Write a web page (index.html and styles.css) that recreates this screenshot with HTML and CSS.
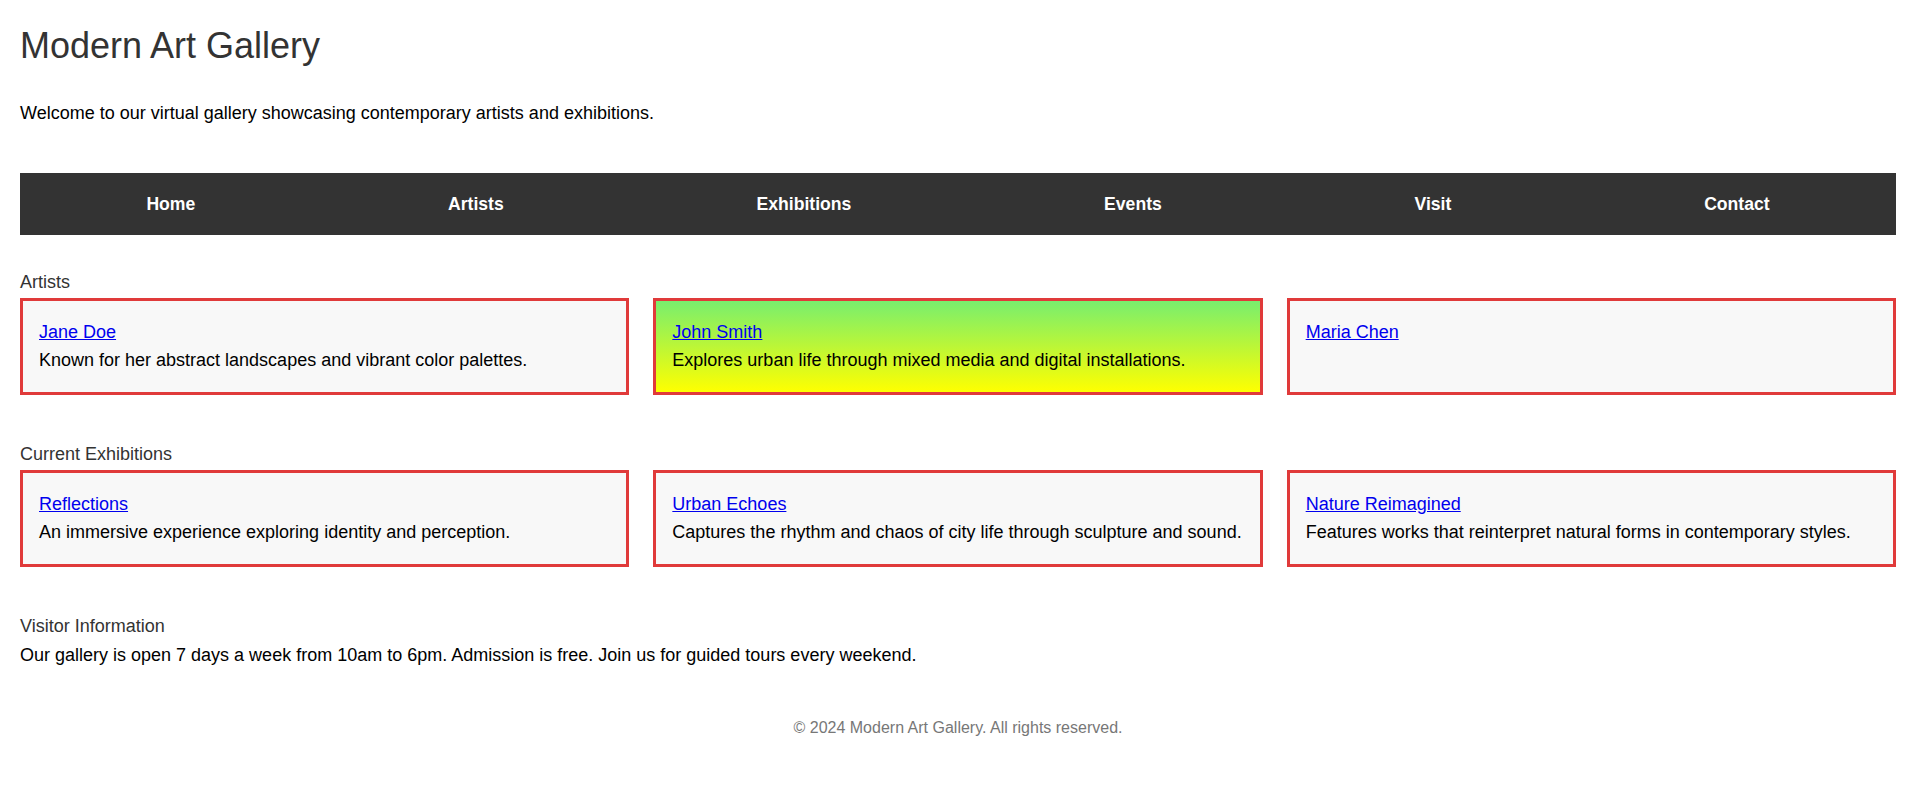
FILE: index.html
```html
<!DOCTYPE html>
<html lang="en">
<head>
<meta charset="utf-8">
<title>Modern Art Gallery</title>
<link rel="stylesheet" href="styles.css">
</head>
<body>
<div class="page">
  <header class="site-header">
    <h1 class="site-title">Modern Art Gallery</h1>
    <p class="intro">Welcome to our virtual gallery showcasing contemporary artists and exhibitions.</p>
  </header>

  <nav class="main-nav">
    <a href="#" class="nav-link">Home</a>
    <a href="#" class="nav-link">Artists</a>
    <a href="#" class="nav-link">Exhibitions</a>
    <a href="#" class="nav-link">Events</a>
    <a href="#" class="nav-link">Visit</a>
    <a href="#" class="nav-link">Contact</a>
  </nav>

  <section class="section">
    <h2 class="section-title">Artists</h2>
    <div class="card-grid">
      <div class="card">
        <h3 class="card-title"><a href="#">Jane Doe</a></h3>
        <p class="card-text">Known for her abstract landscapes and vibrant color palettes.</p>
      </div>
      <div class="card card-gradient">
        <h3 class="card-title"><a href="#">John Smith</a></h3>
        <p class="card-text">Explores urban life through mixed media and digital installations.</p>
      </div>
      <div class="card">
        <h3 class="card-title"><a href="#">Maria Chen</a></h3>
      </div>
    </div>
  </section>

  <section class="section">
    <h2 class="section-title">Current Exhibitions</h2>
    <div class="card-grid">
      <div class="card">
        <h3 class="card-title"><a href="#">Reflections</a></h3>
        <p class="card-text">An immersive experience exploring identity and perception.</p>
      </div>
      <div class="card">
        <h3 class="card-title"><a href="#">Urban Echoes</a></h3>
        <p class="card-text">Captures the rhythm and chaos of city life through sculpture and sound.</p>
      </div>
      <div class="card">
        <h3 class="card-title"><a href="#">Nature Reimagined</a></h3>
        <p class="card-text">Features works that reinterpret natural forms in contemporary styles.</p>
      </div>
    </div>
  </section>

  <section class="section visitor">
    <h2 class="section-title">Visitor Information</h2>
    <p class="visitor-text">Our gallery is open 7 days a week from 10am to 6pm. Admission is free. Join us for guided tours every weekend.</p>
  </section>

  <footer class="site-footer">© 2024 Modern Art Gallery. All rights reserved.</footer>
</div>
</body>
</html>
```

FILE: styles.css
```css
html, body {
  margin: 0;
  padding: 0;
  background: #ffffff;
}

body {
  font-family: "Liberation Sans", Arial, sans-serif;
  font-size: 18px;
  color: #000000;
}

.page {
  padding: 0 20px;
}

.site-title {
  margin: 25px 0 0;
  font-size: 36px;
  font-weight: normal;
  color: #333333;
  line-height: normal;
}

.intro {
  margin: 36px 0 0;
}

.main-nav {
  margin-top: 49px;
  background: #333333;
  height: 62px;
  display: flex;
  justify-content: space-around;
  align-items: center;
}

.nav-link {
  color: #ffffff;
  font-weight: bold;
  font-size: 17.6px;
  text-decoration: none;
}

.section {
  margin-top: 37px;
}

.section + .section {
  margin-top: 49px;
}

.section-title {
  margin: 0 0 5px;
  font-size: 18px;
  font-weight: normal;
  color: #333333;
  line-height: normal;
}

.card-grid {
  display: grid;
  grid-template-columns: repeat(3, 1fr);
  gap: 24px;
}

.card {
  border: 3px solid #e03a3a;
  background: #f8f8f8;
  padding: 21px 16px 21px;
}

.card-gradient {
  background: linear-gradient(to bottom, #78ee6e, #ffff00);
}

.card-title {
  margin: 0 0 7px;
  font-size: 18px;
  font-weight: normal;
  line-height: normal;
}

.card-title a {
  color: #0000ee;
}

.card-text {
  margin: 0;
}

.visitor-text {
  margin: 8px 0 0;
}

.site-footer {
  margin-top: 53px;
  text-align: center;
  font-size: 16px;
  color: #777777;
}
```
